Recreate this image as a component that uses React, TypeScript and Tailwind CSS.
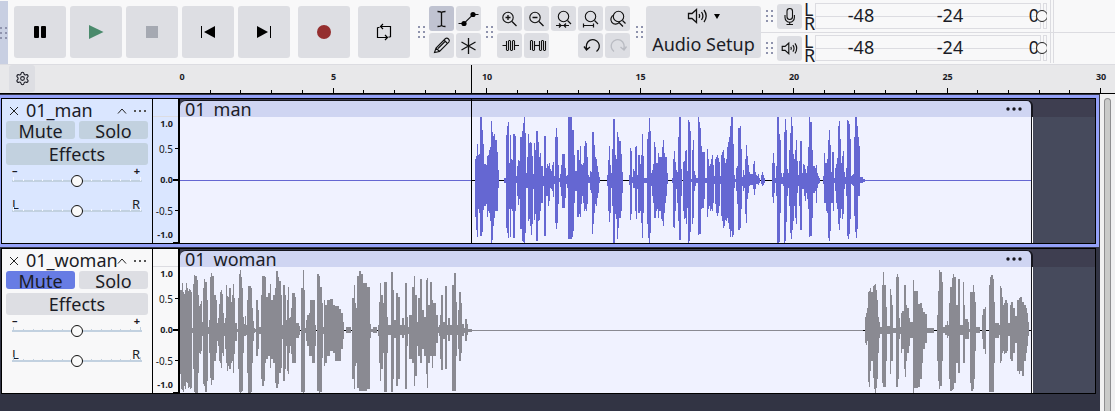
import { useState, type ReactNode } from "react";
import { Settings } from "lucide-react";
import clsx from "clsx";

// Peaks are "x,up,down" steps; every step holds until the next x.
const MAN_PEAKS = `295,21,36 296,24,49 297,36,56 298,25,28 299,26,32 300,63,55 302,50,51 303,36,29 304,16,25 306,15,23 307,24,36 308,25,30 309,30,32 310,33,40 311,59,62 312,48,59 313,44,45 314,46,37 315,40,30 317,28,30 318,10,7 319,0,0
324,2,2 326,45,47 327,54,52 328,58,57 329,17,28 330,45,56 331,21,28 332,20,30 333,46,57 335,44,30 336,4,2 337,14,15 338,20,24 339,19,18 340,43,48 342,49,60 343,57,61 344,63,62 345,47,52 346,7,7 347,23,7 348,46,40 349,37,38 350,38,45 351,37,54 352,24,43 353,6,8 354,37,39 355,30,33 356,49,60 358,38,40 359,23,39 360,27,30 361,14,22 363,4,5 364,44,55 366,12,15 367,16,15 368,14,25 369,17,20 370,11,7 371,9,8 372,15,10 373,18,16 374,4,3 375,43,42 376,52,48 377,43,42 378,15,23 379,2,1 380,6,6 381,15,15 382,26,27 385,12,17 386,4,3 387,5,7 388,63,58 392,50,56 393,50,50 394,25,22 395,9,10 397,30,36 399,20,33 400,34,36 401,16,23 402,15,15 403,17,22 404,34,30 405,39,28 406,37,30 407,23,23 408,5,2 409,3,2 410,9,9 411,8,12 412,48,53 413,48,43 414,35,32 415,23,23 416,21,25 417,14,17 418,8,12 419,3,2 420,0,0
427,5,5 428,20,30 429,34,41 430,15,32 431,7,7 432,31,25 433,61,62 435,25,33 436,21,38 437,48,58 438,43,47 439,39,37 441,26,30 442,8,12 443,0,0 449,5,4 450,32,39 451,29,33 452,3,2 453,11,7 454,9,7 455,33,30 456,34,38 457,5,8 458,25,32 460,16,30 461,25,42 462,46,57 463,24,32 464,2,2 467,41,43 468,48,57 469,62,62 470,49,52 471,7,5 472,10,15 473,16,22 474,38,37 475,33,37 476,17,30 477,17,28 478,27,37 479,23,30 481,23,38 482,33,40 483,40,45 484,27,32 485,23,22 486,23,15 487,7,3 488,0,0
492,2,2 493,21,46 494,29,47 495,18,30 496,10,8 497,8,22 498,43,40 499,63,59 501,11,15 502,0,0 503,18,30 504,19,38 505,29,37 506,30,43 507,9,27 508,60,62 509,58,60 510,49,51 511,1,1 512,30,43 513,40,37 514,9,10 515,5,5 516,2,2 518,63,54 519,58,53 520,52,53 521,34,28 522,28,27 524,28,18 525,2,2 527,31,36 528,21,28 529,14,25 530,16,30 531,21,28 532,25,30 533,15,22 534,4,3 535,21,23 536,23,32 537,25,35 538,22,32 539,18,25 540,4,3 541,25,35 542,28,40 543,30,47 544,22,45 545,17,39 546,21,40 547,33,37 548,38,42 549,43,48 550,54,56 551,63,50 552,63,56 553,36,54 554,5,7 555,1,1 556,12,10 557,14,23 558,52,49 560,54,47 561,31,28 562,3,5 563,10,10 564,5,7 565,21,33 566,35,42 567,24,18 568,15,12 569,8,5 570,6,4 573,16,8 574,19,14 575,8,8 576,5,3 577,4,3 578,6,4 579,2,2 580,0,0 581,5,3 582,8,5 583,5,4 584,2,2 585,0,0
592,17,16 593,27,22 594,17,12 595,2,2 596,14,15 597,63,62 599,46,61 600,40,32 601,7,3 602,3,3 603,7,5 604,48,62 605,61,60 606,50,41 607,11,15 608,7,7 609,30,25 610,47,52 611,63,58 612,54,49 613,26,40 614,21,25 615,30,37 616,40,43 617,19,12 618,5,5 619,19,25 620,39,49 622,7,8 623,16,8 624,15,15 625,11,20 626,7,12 627,14,18 628,33,28 629,63,56 630,58,55 632,30,37 633,14,12 635,12,10 636,15,22 637,7,7 638,4,3 639,2,2 640,0,0 643,4,3 644,27,22 645,17,22 646,17,30 647,21,32 648,40,57 649,50,60 650,35,50 651,8,22 652,28,22 653,28,30 654,2,2 655,12,10 656,16,22 657,22,28 658,54,43 659,59,49 660,41,37 661,17,28 662,24,38 663,29,33 664,8,8 665,3,3 666,12,15 667,60,55 668,59,58 669,56,53 670,41,38 671,4,3 672,5,4 673,6,5 674,43,35 675,63,51 676,63,57 677,54,48 678,43,15 679,34,15 680,3,2 683,1,1 685,0,0`;

const WOMAN_PEAKS = `0,40,43 1,40,58 2,47,59 3,38,61 4,36,55 5,40,58 6,47,51 7,42,52 8,39,57 9,41,56 10,40,58 11,38,57 12,2,2 13,46,38 14,55,61 15,54,62 17,50,62 18,35,42 19,24,22 20,26,23 21,29,20 22,8,5 23,42,53 24,51,55 25,48,61 27,30,50 28,3,3 29,10,22 30,53,47 31,57,54 32,54,49 34,35,30 36,30,22 37,7,10 38,12,15 39,26,30 40,38,32 41,40,37 42,36,22 43,17,25 44,7,5 45,12,18 46,45,32 47,34,40 48,33,35 49,42,38 51,28,32 52,35,30 53,46,42 54,32,23 55,7,10 57,1,1 58,32,38 59,56,61 60,60,62 61,53,61 62,42,60 63,13,22 64,6,5 65,14,5 66,5,4 67,30,42 68,44,62 71,42,61 72,22,32 73,9,10 74,2,2 75,1,1 76,30,25 78,20,18 79,3,3 81,35,48 82,54,55 84,54,50 85,53,32 86,33,28 88,37,25 90,46,37 91,30,28 93,35,32 95,42,52 96,59,57 98,53,53 99,49,42 101,35,37 102,5,8 103,45,50 105,35,38 106,10,15 107,30,40 108,43,43 109,12,22 110,13,15 111,22,23 112,37,32 115,33,32 116,7,7 119,4,4 120,0,0 121,42,61 123,60,62 124,40,61 125,2,2 126,10,10 127,15,15 129,17,25 130,30,25 132,30,32 135,5,15 136,0,0 137,56,60 139,54,62 140,43,61 142,27,27 143,3,3 144,30,35 145,25,32 147,30,25 150,31,20 153,25,22 155,24,30 159,21,30 161,17,18 163,8,8 164,0,0 166,3,2 171,0,0
172,32,48 174,45,58 175,27,35 176,22,32 177,54,57 179,59,60 181,56,60 183,47,60 187,43,58 190,6,7 191,1,1 193,3,2 197,0,0 198,5,5 199,28,32 200,47,50 201,35,38 203,27,22 204,48,61 207,13,22 208,5,4 211,58,61 213,40,48 214,10,7 216,37,55 218,33,48 220,5,4 222,12,7 224,5,4 225,47,58 227,13,15 228,3,3 229,15,28 232,43,32 234,54,55 235,35,45 237,8,15 238,32,25 240,51,32 242,20,18 244,13,25 246,50,43 247,52,57 248,25,32 250,48,25 252,30,37 253,27,25 256,15,12 258,3,2 259,5,5 260,15,28 261,35,39 263,8,8 265,44,38 267,5,4 268,12,10 270,5,4 272,45,60 274,57,60 276,28,25 277,5,4 278,20,18 279,38,30 281,27,22 282,6,5 284,2,2 285,11,10 287,6,4 288,1,1 292,0,0
685,13,12 686,17,14 687,22,10 688,38,51 689,39,56 690,42,40 691,38,30 693,44,47 694,45,58 695,46,62 696,40,57 697,30,48 698,13,22 699,8,7 700,3,3 702,45,52 703,58,56 704,45,56 706,23,30 707,4,3 710,41,43 711,35,30 712,25,30 713,2,2 716,53,56 717,56,56 718,53,48 719,12,8 720,3,3 721,17,22 722,19,18 724,45,38 725,45,46 726,25,30 727,22,22 729,12,15 730,8,7 733,50,62 734,39,57 738,26,56 740,27,48 742,22,32 743,18,18 745,16,12 747,2,2 754,0,0 757,15,30 758,39,50 759,60,58 760,58,55 762,48,30 763,3,2 765,5,4 767,9,7 768,5,5 769,27,48 770,43,60 772,52,59 773,56,58 774,53,52 776,25,32 778,51,42 780,5,4 783,48,32 784,25,32 785,11,8 788,8,8 789,1,1 790,38,52 791,38,60 793,45,58 794,38,48 795,28,20 796,3,2 800,0,0 802,15,8 803,21,18 805,23,23 806,0,0 809,45,61 810,53,61 811,55,61 813,51,61 814,28,32 815,7,7 819,5,4 820,44,32 821,42,30 822,33,22 823,25,20 824,27,23 825,30,22 827,27,20 828,7,5 830,25,28 831,28,30 833,22,22 835,14,12 837,30,40 839,32,43 840,33,40 842,28,45 844,25,30 846,22,22 847,17,15 848,8,5 849,0,0`;

const CLIP_LENGTH = 852;
const FACE = "rounded-[3px] bg-[#dddee3]";

function peaksToPath(peaks: string) {
  const steps = peaks.trim().split(/\s+/).map((p) => p.split(",").map(Number));
  return steps
    .map(([x, up, down], i) => {
      const next = steps[i + 1]?.[0] ?? x;
      if (up === 0) return "";
      return `M${x} ${63 - up}H${next}V${64 + down}H${x}Z`;
    })
    .join("");
}

function Grip() {
  return (
    <div className="grid shrink-0 grid-cols-2 gap-x-[3px] gap-y-[3px]" aria-hidden="true">
      {[0, 1, 2, 3, 4, 5].map((i) => (
        <span key={i} className="size-[2px] bg-[#8f93ad]" />
      ))}
    </div>
  );
}

function BigButton({ label, children }: { label: string; children: ReactNode }) {
  return (
    <button aria-label={label} className={clsx(FACE, "flex size-[52px] shrink-0 items-center justify-center")}>
      <svg width="24" height="24" viewBox="0 0 24 24" fill="none">
        {children}
      </svg>
    </button>
  );
}

function SmallButton({ label, active, children }: { label: string; active?: boolean; children: ReactNode }) {
  return (
    <button
      aria-label={label}
      className={clsx("flex size-[25px] shrink-0 items-center justify-center rounded-[3px]", active ? "bg-[#c0c3d1]" : "bg-[#dddee3]")}
    >
      <svg width="25" height="25" viewBox="0 0 25 25" fill="none" stroke="#111" strokeWidth="1.1">
        {children}
      </svg>
    </button>
  );
}

function SpeakerShape() {
  return (
    <>
      <path d="M1.5 6.5h3.5l4.500-4v13l-4.500-4h-3.500z" />
      <path d="M12 7.200q1.200 1.800 0 3.600M14.500 5q2.800 4 0 8M17 3q4.400 6 0 12" />
    </>
  );
}

function Transport() {
  return (
    <div className="flex gap-1">
      <BigButton label="Pause">
        <rect x="6" y="6" width="5" height="12" rx="1" fill="#000" />
        <rect x="13" y="6" width="5" height="12" rx="1" fill="#000" />
      </BigButton>
      <BigButton label="Play">
        <path d="M5 5l14.500 7L5 19z" fill="#4a8a6c" />
      </BigButton>
      <BigButton label="Stop">
        <rect x="6" y="6" width="12" height="12" fill="#a5a9b2" />
      </BigButton>
      <BigButton label="Skip to start">
        <path d="M19 6v12L8 12z" fill="#000" />
        <path d="M5.500 6v12" stroke="#000" />
      </BigButton>
      <BigButton label="Skip to end">
        <path d="M5 6v12l11-6z" fill="#000" />
        <path d="M18.500 6v12" stroke="#000" />
      </BigButton>
      <div className="ml-1 flex gap-2">
        <BigButton label="Record">
          <circle cx="12" cy="12" r="7" fill="#952f2f" />
        </BigButton>
        <BigButton label="Loop">
          <path d="M9 6.500h9.500V17M15 17.500H5.500V7.500M5.500 7.500h2M18.500 17h-2M11 4L8.500 6.500 11 9M13 15l2.500 2.500L13 20" stroke="#000" strokeWidth="1.200" />
        </BigButton>
      </div>
    </div>
  );
}

function Tools() {
  return (
    <div className="grid grid-cols-2 gap-[2px]">
      <SmallButton label="Selection tool" active>
        <path d="M8.500 5.500q4 0 4 1.500 0-1.500 4-1.500M12.500 7v12M8.500 20.500q4 0 4-1.500 0 1.500 4 1.500" strokeWidth="1.300" />
      </SmallButton>
      <SmallButton label="Envelope tool">
        <path d="M2.500 17.500h5.500l9-9h5.500" />
        <circle cx="8" cy="17.500" r="2.600" fill="#000" stroke="none" />
        <circle cx="17" cy="8.500" r="2.600" fill="#000" stroke="none" />
      </SmallButton>
      <SmallButton label="Draw tool">
        <path d="M5.500 19.500l1.500-4.500L16.500 5.500q1.500-1 3 .500t.500 3L10.500 18.500zM7 15l3.500 3.500M15 7l3 3M9 15.500L16.500 8" />
      </SmallButton>
      <SmallButton label="Multi-tool">
        <path d="M12.500 5v16M5.500 9l14 8M19.500 9l-14 8" strokeWidth="1.300" />
      </SmallButton>
    </div>
  );
}

function EditTools() {
  return (
    <div className="grid grid-cols-5 gap-[2px]">
      <SmallButton label="Zoom in">
        <circle cx="11" cy="11.500" r="5.200" />
        <path d="M15 15.500l4.500 4.500M8.500 11.500h5M11 9v5" strokeWidth="1.300" />
      </SmallButton>
      <SmallButton label="Zoom out">
        <circle cx="11" cy="11.500" r="5.200" />
        <path d="M15 15.500l4.500 4.500M8.500 11.500h5" strokeWidth="1.300" />
      </SmallButton>
      <SmallButton label="Fit selection to width">
        <circle cx="12.500" cy="10.500" r="5.200" />
        <path d="M16.500 14.500l3.500 3.500M5 19.500h13M8 17.500l2 2-2 2M15 17.500l-2 2 2 2" strokeWidth="1.200" />
      </SmallButton>
      <SmallButton label="Fit project to width">
        <circle cx="12.500" cy="10.500" r="5.200" />
        <path d="M16.500 14.500l3.500 3.500M5.500 19.500h10M5.500 17.500v4M15.500 17.500v4" strokeWidth="1.200" />
      </SmallButton>
      <SmallButton label="Zoom toggle">
        <circle cx="13.500" cy="10.500" r="5.200" />
        <path d="M17.500 14.500l3 3M9 9a4.700 4.700 0 1 0 5.500 7M13.500 16l4.500 4.500" strokeWidth="1.200" />
      </SmallButton>
      <SmallButton label="Trim audio outside selection">
        <path d="M5.500 12.500h3.500M18 12.500h4" />
        <path d="M9.500 8v9M11.500 8v9M13.500 8v9M15.500 8v9M17.500 8v9M9.500 17.500h2M11.500 7.500h2M13.500 17.500h2M15.500 7.500h2" />
      </SmallButton>
      <SmallButton label="Silence audio selection">
        <path d="M10.500 12.500h5" />
        <path d="M6.500 17V8M8.500 8v9M10.500 8v9M15.500 8v9M17.500 8v9M19.500 8v9M21.500 8v9M6.500 7.500h2M8.500 17.500h2M15.500 17.500h2M17.500 7.500h2M19.500 17.500h2" />
      </SmallButton>
      <span />
      <SmallButton label="Undo">
        <path d="M9 16A6.500 6.500 0 1 1 18.500 18.500M6 13.500l2.500 3.500 3.500-3" strokeWidth="1.300" />
      </SmallButton>
      <SmallButton label="Redo">
        <path d="M18.500 16A6.500 6.500 0 1 0 9 18.500M21.500 13.500l-2.500 3.500-3.500-3" stroke="#b9bbc2" strokeWidth="1.300" />
      </SmallButton>
    </div>
  );
}

function Meter({ label, icon }: { label: string; icon: ReactNode }) {
  return (
    <div className="flex h-full items-center pl-[5px]">
      <Grip />
      <div className="ml-1">
        <SmallButton label={label}>{icon}</SmallButton>
      </div>
      <div className="ml-[2px] w-[11px] text-[18px] leading-[14px]">
        <div>L</div>
        <div>R</div>
      </div>
      <div className="relative flex h-[26px] w-[232px] gap-[2px] overflow-hidden text-[18px]">
        <div className="flex grow items-start border border-[#dcdce1] bg-[linear-gradient(#dcdce1,#dcdce1)] bg-[length:100%_1px] bg-center bg-no-repeat">
          <span className="w-[90px] text-center leading-[22px]">-48</span>
          <span className="w-[88px] text-center leading-[22px]">-24</span>
          <span className="grow pr-px text-right leading-[22px]">0</span>
        </div>
        <div className="w-1 border border-[#dcdce1]" />
        <input
          type="range"
          aria-label={`${label} level`}
          defaultValue={100}
          className="absolute inset-y-0 left-0 w-[233px] appearance-none bg-transparent [&::-webkit-slider-thumb]:size-3 [&::-webkit-slider-thumb]:appearance-none [&::-webkit-slider-thumb]:rounded-full [&::-webkit-slider-thumb]:border [&::-webkit-slider-thumb]:border-[#222] [&::-webkit-slider-thumb]:bg-[#f8f8f9]"
        />
      </div>
    </div>
  );
}

function Toolbar() {
  return (
    <div className="flex h-[65px] border-b border-[#dcdce1] bg-[#f8f8f9]">
      <div className="mt-px mr-[6px] flex w-2 shrink-0 items-center justify-end bg-[#c8cfe2] pr-px">
        <Grip />
      </div>
      <div className="flex items-center">
        <Transport />
        <div className="mr-1 ml-2">
          <Grip />
        </div>
        <Tools />
        <div className="mr-1 ml-[5px]">
          <Grip />
        </div>
        <EditTools />
        <div className="mr-[3px] ml-[6px]">
          <Grip />
        </div>
        <button className={clsx(FACE, "flex h-[52px] w-[115px] flex-col items-center justify-between text-[18px]")}>
          <span className="flex items-center gap-[5px] pt-px">
            <svg width="22" height="18" viewBox="0 0 22 18" fill="none" stroke="#111" strokeWidth="1.300">
              <SpeakerShape />
            </svg>
            <svg width="6" height="5" viewBox="0 0 6 5">
              <path d="M0 0h6L3 5z" />
            </svg>
          </span>
          <span className="leading-[27px]">Audio Setup</span>
        </button>
      </div>
      <div className="min-w-0 grow">
        <div className="flex h-8">
          <div className="w-[290px] shrink-0 border-r border-[#dcdce1]">
            <Meter
              label="Record meter"
              icon={
                <>
                  <rect x="10" y="4.500" width="5.500" height="11" rx="2.700" />
                  <path d="M8 11v2.500a4.700 4.700 0 0 0 9.400 0V11M12.700 18v2.500M9.500 20.500h6.500" />
                </>
              }
            />
          </div>
          <div className="w-[3px] border-r border-[#dcdce1]" />
        </div>
        <div className="flex h-[31px] border-t border-[#dcdce1]">
          <div className="w-[290px] shrink-0 border-r border-[#dcdce1]">
            <Meter
              label="Playback meter"
              icon={
                <g transform="translate(4 5) scale(.82)" strokeWidth="1.400">
                  <SpeakerShape />
                </g>
              }
            />
          </div>
          <div className="w-[3px] border-r border-[#dcdce1]" />
        </div>
      </div>
    </div>
  );
}

function Timeline() {
  return (
    <div className="flex h-[29px] border-b border-black bg-[#e8e8ea] pr-[14px]">
      <div className="w-[180px] shrink-0 pl-[9px]">
        <button aria-label="Timeline options" className={clsx(FACE, "flex h-[27px] w-[26px] items-center justify-center")}>
          <Settings size={15} strokeWidth={1.7} />
        </button>
      </div>
      <div className="relative flex grow items-end">
        <span className="absolute top-[5px] left-[2px] w-6 -translate-x-1/2 text-center text-[9px] leading-[14px] font-bold">0</span>
        {Array.from({ length: 30 }, (_, i) => i + 1).map((s) => (
          <div key={s} className="relative flex h-full flex-1 items-end justify-end">
            {s % 5 === 0 && (
              <span className="absolute top-[5px] right-0 w-6 translate-x-1/2 text-center text-[9px] leading-[14px] font-bold">{s}</span>
            )}
            <span className={clsx("w-px bg-black", s % 5 === 0 ? "h-[5px]" : "h-[3px]")} />
          </div>
        ))}
        <div className="absolute inset-y-0 left-[31.63%] w-px bg-black" />
      </div>
    </div>
  );
}

function TrackSlider({ label, low, high, pan, tick }: { label: string; low: string; high: string; pan?: boolean; tick: string }) {
  return (
    <div className="mx-[6px]">
      <div className={clsx("flex h-3 justify-between", pan ? "text-[13px] leading-[18px]" : "text-[11px] leading-3 font-bold")}>
        <span>{low}</span>
        <span className="pr-[2px]">{high}</span>
      </div>
      <div className="flex h-1 items-end justify-between px-px" aria-hidden="true">
        {Array.from({ length: 14 }, (_, i) => (
          <span key={i} className={clsx("w-px", tick, i % 13 === 0 ? "h-1" : "h-[2px]")} />
        ))}
      </div>
      <input
        type="range"
        aria-label={label}
        className="-mt-[6px] block h-3 w-full appearance-none bg-transparent bg-[linear-gradient(#c2d1e0,#c2d1e0)] bg-[length:100%_2px] bg-center bg-no-repeat [&::-webkit-slider-thumb]:size-3 [&::-webkit-slider-thumb]:appearance-none [&::-webkit-slider-thumb]:rounded-full [&::-webkit-slider-thumb]:border [&::-webkit-slider-thumb]:border-[#111] [&::-webkit-slider-thumb]:bg-[#fafafa]"
      />
    </div>
  );
}

const SCALE = [
  { text: "1.0", row: "h-[14px]", bold: true, tick: "" },
  { text: "0.5", row: "h-[35px]", bold: false, tick: "h-px w-[3px]" },
  { text: "0.0", row: "h-[28px]", bold: true, tick: "h-[2px] w-[5px]" },
  { text: "-0.5", row: "h-[33px]", bold: false, tick: "h-px w-[3px]" },
  { text: "-1.0", row: "h-[16px]", bold: true, tick: "h-px w-[5px] self-end" },
];

function Track({ name, peaks, selected, muted: initialMuted }: { name: string; peaks: string; selected?: boolean; muted?: boolean }) {
  const [muted, setMuted] = useState(!!initialMuted);
  const [solo, setSolo] = useState(false);
  const face = selected ? "bg-[#c2d1df]" : "bg-[#dddee3]";
  const panel = selected ? "bg-[#dae6ff]" : "bg-[#f8f8f9]";
  const wave = selected ? "#6567d2" : "#8a8a92";
  const live = selected ? [[291, 394]] : [[0, 292], [683, 168]];

  return (
    <section className={clsx("pr-[3px] pl-px", selected ? "border-y-[3px] border-[#94a1f8] bg-[#94a1f8]" : "bg-[#323444]")}>
      <div className="flex h-[146px] border border-black">
        <div className={clsx("w-[150px] shrink-0", panel)}>
          <div className="flex h-[22px] items-center pt-px pl-[7px]">
            <button aria-label="Delete track">
              <svg width="10" height="10" viewBox="0 0 10 10" stroke="#222">
                <path d="M1 1l8 8M9 1L1 9" />
              </svg>
            </button>
            <span className="ml-[7px] w-[92px] text-[18px] leading-[25px] whitespace-nowrap">{name}</span>
            <button aria-label="Collapse track" className="-ml-px">
              <svg width="10" height="8" viewBox="0 0 10 8" fill="none" stroke="#222">
                <path d="M1 6.500l4-4.500 4 4.500" />
              </svg>
            </button>
            <button aria-label="Track menu" className="ml-[6px]">
              <svg width="13" height="4" viewBox="0 0 13 4" fill="#555">
                <path d="M1 1h2v2H1zM6 1h2v2H6zM11 1h2v2h-2z" />
              </svg>
            </button>
          </div>
          <div className="grid grid-cols-2 gap-1 px-1 text-[18px]">
            <button
              aria-pressed={muted}
              onClick={() => setMuted(!muted)}
              className={clsx("h-[18px] rounded-[3px] leading-[20px]", muted ? "bg-[#677ce4]" : face)}
            >
              Mute
            </button>
            <button
              aria-pressed={solo}
              onClick={() => setSolo(!solo)}
              className={clsx("h-[18px] rounded-[3px] leading-[20px]", solo ? "bg-[#677ce4]" : face)}
            >
              Solo
            </button>
            <button className={clsx("col-span-2 h-[22px] rounded-[3px] leading-[22px]", face)}>Effects</button>
          </div>
          <div className="flex flex-col gap-2 px-1">
            <TrackSlider label={`${name} volume`} low="–" high="+" tick={selected ? "bg-[#f4f7ff]" : "bg-[#c2d1e0]"} />
            <TrackSlider label={`${name} pan`} low="L" high="R" pan tick={selected ? "bg-[#f4f7ff]" : "bg-[#c2d1e0]"} />
          </div>
        </div>

        <div className={clsx("flex w-[28px] shrink-0 flex-col border-r-2 border-l border-black", panel)}>
          <div className="h-[18px] border-b border-[#dcdce1]" />
          {SCALE.map((s) => (
            <div
              key={s.text}
              className={clsx("flex items-center justify-end leading-[12px]", s.row, s.bold ? "text-[9px] font-bold" : "text-[10px]")}
            >
              <span className={clsx("text-right", s.bold ? !s.tick && "pr-[5px]" : "pr-[2px]")}>{s.text}</span>
              {s.tick && <span className={clsx("bg-black", s.tick)} />}
            </div>
          ))}
        </div>

        <div className="flex min-w-0 grow bg-[linear-gradient(#3e3e50_18px,#464a5c_18px)]">
          <div className="relative flex min-w-0 flex-[853] flex-col">
            <div className="mt-px flex h-[17px] items-center justify-between overflow-hidden rounded-t-[6px] border-t border-r-2 border-[#16161e] bg-[#cfd5f2] pr-[9px] pl-[5px]">
              <span className="text-[18px] leading-[17px]">{name}</span>
              <button aria-label="Clip menu">
                <svg width="16" height="4" viewBox="0 0 16 4" fill="#16161e">
                  <circle cx="2" cy="2" r="1.700" />
                  <circle cx="8" cy="2" r="1.700" />
                  <circle cx="14" cy="2" r="1.700" />
                </svg>
              </button>
            </div>
            <div className="min-h-0 grow border-r border-white bg-[#f0f2ff]">
              <svg className="block h-full w-full" viewBox={`0 0 ${CLIP_LENGTH} 126`} preserveAspectRatio="none" shapeRendering="crispEdges">
                <rect x="0" y="63" width={CLIP_LENGTH} height="1" fill={wave} />
                {live.map(([x, w]) => (
                  <rect key={x} x={x} y="63" width={w} height="1" fill="#000" />
                ))}
                <path d={peaksToPath(peaks)} fill={wave} />
                <rect x={CLIP_LENGTH - 1} y="0" width="1" height="126" fill="#16161e" />
              </svg>
            </div>
            {selected && <div className="absolute inset-y-0 left-[34.1%] w-px bg-black" />}
          </div>
          <div className="flex-[62]" />
        </div>
      </div>
    </section>
  );
}

export default function App() {
  return (
    <div className="flex h-screen flex-col overflow-hidden bg-[#323444] font-['Noto_Sans',sans-serif] text-[#1b1c26]">
      <Toolbar />
      <Timeline />
      <div className="flex min-h-0 grow">
        <main className="min-w-0 grow border-r border-[#323444] pt-px">
          <Track name="01_man" peaks={MAN_PEAKS} selected />
          <div className="h-px" />
          <Track name="01_woman" peaks={WOMAN_PEAKS} muted />
        </main>
        <div className="w-[15px] shrink-0 bg-[#f0f0f1] px-1 pt-1" aria-hidden="true">
          <div className="h-full rounded-t-full border border-b-0 border-[#8e8e90] bg-[#c9cac9]" />
        </div>
      </div>
    </div>
  );
}
